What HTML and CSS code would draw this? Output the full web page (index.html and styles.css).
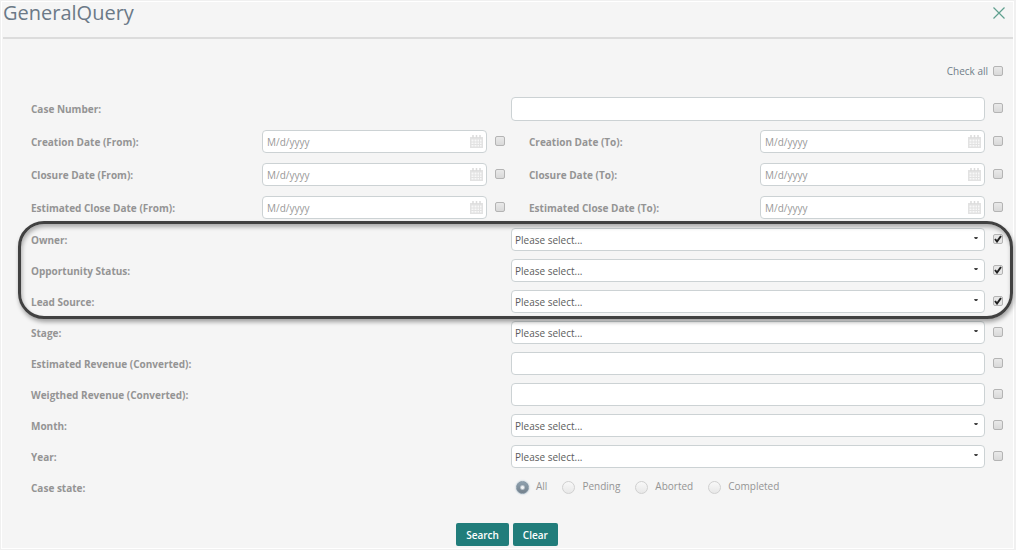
FILE: index.html
```html
<!DOCTYPE html>
<html lang="en">
<head>
<meta charset="utf-8">
<meta name="viewport" content="width=device-width, initial-scale=1">
<title>GeneralQuery</title>
<link rel="stylesheet" href="styles.css">
</head>
<body>
<svg class="sprite" aria-hidden="true">
  <symbol id="calendar" viewBox="0 0 13 13">
    <path d="M0 2h13v11H0z" fill="#e2e2e2"/>
    <path d="M3 0v3M6.500 0v3M10 0v3" stroke="#dcdcdc" stroke-width="1.500"/>
    <path d="M1.500 4.500h2v2h-2zM4.500 4.500h2v2h-2zM7.500 4.500h1.500v2H7.500zM10 4.500h1.500v2H10zM1.500 7.500h2v1.500h-2zM4.500 7.500h2V9h-2zM7.500 7.500H9V9H7.500zM10 7.500h1.500V9H10zM1.500 10h2v1.500h-2zM4.500 10h2v1.500h-2zM7.500 10H9v1.500H7.500zM10 10h1.500v1.500H10z" fill="#f8f8f8"/>
  </symbol>
</svg>
<main class="dialog">
  <header class="header">
    <h1 class="title">GeneralQuery</h1>
    <button class="close" type="button" aria-label="Close">
      <svg width="12" height="12" viewBox="0 0 12 12"><path d="M.5.5l11 11M11.500.5l-11 11" fill="none" stroke="#5fa08f" stroke-width="1.200"/></svg>
    </button>
  </header>
  <form class="form">
    <div class="check-all"><label for="all">Check all</label><input class="check" type="checkbox" id="all"></div>

    <div class="row tall"><label class="label" for="case">Case Number:</label><input class="field" id="case" type="text"><input class="check" type="checkbox" aria-label="Use Case Number"></div>

    <div class="row pair">
      <label class="label" for="d1">Creation Date (From):</label><div class="date"><input class="field" id="d1" type="text" placeholder="M/d/yyyy"><button class="pick" type="button" aria-label="Pick date"><svg class="cal"><use href="#calendar"/></svg></button></div><input class="check" type="checkbox" aria-label="Use Creation Date (From)">
      <label class="label second" for="d2">Creation Date (To):</label><div class="date"><input class="field" id="d2" type="text" placeholder="M/d/yyyy"><button class="pick" type="button" aria-label="Pick date"><svg class="cal"><use href="#calendar"/></svg></button></div><input class="check" type="checkbox" aria-label="Use Creation Date (To)">
    </div>
    <div class="row pair">
      <label class="label" for="d3">Closure Date (From):</label><div class="date"><input class="field" id="d3" type="text" placeholder="M/d/yyyy"><button class="pick" type="button" aria-label="Pick date"><svg class="cal"><use href="#calendar"/></svg></button></div><input class="check" type="checkbox" aria-label="Use Closure Date (From)">
      <label class="label second" for="d4">Closure Date (To):</label><div class="date"><input class="field" id="d4" type="text" placeholder="M/d/yyyy"><button class="pick" type="button" aria-label="Pick date"><svg class="cal"><use href="#calendar"/></svg></button></div><input class="check" type="checkbox" aria-label="Use Closure Date (To)">
    </div>
    <div class="row pair">
      <label class="label" for="d5">Estimated Close Date (From):</label><div class="date"><input class="field" id="d5" type="text" placeholder="M/d/yyyy"><button class="pick" type="button" aria-label="Pick date"><svg class="cal"><use href="#calendar"/></svg></button></div><input class="check" type="checkbox" aria-label="Use Estimated Close Date (From)">
      <label class="label second" for="d6">Estimated Close Date (To):</label><div class="date"><input class="field" id="d6" type="text" placeholder="M/d/yyyy"><button class="pick" type="button" aria-label="Pick date"><svg class="cal"><use href="#calendar"/></svg></button></div><input class="check" type="checkbox" aria-label="Use Estimated Close Date (To)">
    </div>

    <div class="highlight">
      <div class="row"><label class="label" for="owner">Owner:</label><select class="field select" id="owner"><option>Please select...</option></select><input class="check" type="checkbox" checked aria-label="Use Owner"></div>
      <div class="row"><label class="label" for="status">Opportunity Status:</label><select class="field select" id="status"><option>Please select...</option></select><input class="check" type="checkbox" checked aria-label="Use Opportunity Status"></div>
      <div class="row"><label class="label" for="lead">Lead Source:</label><select class="field select" id="lead"><option>Please select...</option></select><input class="check" type="checkbox" checked aria-label="Use Lead Source"></div>
    </div>

    <div class="row"><label class="label" for="stage">Stage:</label><select class="field select" id="stage"><option>Please select...</option></select><input class="check" type="checkbox" aria-label="Use Stage"></div>
    <div class="row"><label class="label" for="est">Estimated Revenue (Converted):</label><input class="field" id="est" type="text"><input class="check" type="checkbox" aria-label="Use Estimated Revenue"></div>
    <div class="row"><label class="label" for="wei">Weigthed Revenue (Converted):</label><input class="field" id="wei" type="text"><input class="check" type="checkbox" aria-label="Use Weigthed Revenue"></div>
    <div class="row"><label class="label" for="month">Month:</label><select class="field select" id="month"><option>Please select...</option></select><input class="check" type="checkbox" aria-label="Use Month"></div>
    <div class="row"><label class="label" for="year">Year:</label><select class="field select" id="year"><option>Please select...</option></select><input class="check" type="checkbox" aria-label="Use Year"></div>
    <div class="row" role="radiogroup" aria-labelledby="state">
      <span class="label" id="state">Case state:</span>
      <div class="radios">
        <label class="option"><input class="radio" type="radio" name="state" checked><span class="option-text">All</span></label>
        <label class="option"><input class="radio" type="radio" name="state"><span class="option-text">Pending</span></label>
        <label class="option"><input class="radio" type="radio" name="state"><span class="option-text">Aborted</span></label>
        <label class="option"><input class="radio" type="radio" name="state"><span class="option-text">Completed</span></label>
      </div>
    </div>
    <div class="actions"><button class="btn" type="button">Search</button><button class="btn" type="reset">Clear</button></div>
  </form>
</main>
</body>
</html>
```

FILE: styles.css
```css
* { box-sizing: border-box; }
body {
  margin: 0;
  padding: 1px 2px 1px 1px;
  background: #f0f0f0;
  color: #6f7d88;
  font: 10px/16px "Open Sans", "Noto Sans", sans-serif;
}
.sprite { display: none; }
.dialog {
  min-height: calc(100vh - 2px);
  border: 1px solid #fff;
  background: #f5f5f5;
}
.header {
  display: flex;
  justify-content: space-between;
  align-items: flex-start;
  height: 37px;
  margin: 0 0 0 1px;
  padding-right: 8px;
  border-bottom: 2px solid #dcdcdc;
}
.title {
  margin: 0;
  color: #6b7987;
  font-size: 20px;
  line-height: 22px;
  font-weight: 400;
}
.close {
  display: flex;
  margin-top: 5px;
  padding: 0;
  border: 0;
  background: none;
}
.form { padding: 24px 10px 0 29px; }
.check-all {
  display: flex;
  justify-content: flex-end;
  align-items: center;
  gap: 5px;
  height: 16px;
  margin-bottom: 13px;
}
.row {
  display: grid;
  grid-template-columns: 480fr 474fr 18px;
  align-items: center;
  height: 31px;
}
.tall, .pair { height: 33px; }
.pair { grid-template-columns: 231fr 225fr 18px 255fr 225fr 18px; }
.second { padding-left: 24px; }
.label { color: #949494; font-weight: 700; }
.field {
  width: 100%;
  height: 23px;
  padding: 0 4px;
  border: 1px solid #ccd2d4;
  border-radius: 4px;
  background: #fff;
  color: #5c5c5c;
  font: inherit;
}
.tall .field { height: 24px; }
.field::placeholder { color: #999; opacity: 1; }
.date { position: relative; }
.date .field { display: block; padding-right: 24px; }
.pick {
  position: absolute;
  top: 5px;
  right: 4px;
  display: flex;
  padding: 0;
  border: 0;
  background: none;
}
.cal { width: 13px; height: 13px; }
.select {
  padding: 0 3px;
  appearance: none;
  background: #fff url("data:image/svg+xml,%3Csvg xmlns='http://www.w3.org/2000/svg' width='4' height='2'%3E%3Cpath d='M0 0h4L3 2H1z' fill='%23444'/%3E%3C/svg%3E") no-repeat right 6px top 8px;
}
.check {
  appearance: none;
  justify-self: end;
  width: 10px;
  height: 10px;
  margin: 0 0 2px;
  border: 1px solid #b4b4b4;
  border-radius: 2px;
  background: linear-gradient(#e9e9e9, #d9d9d9);
}
.check-all .check { margin: 0; }
.check:checked {
  background: #e6e6e6 url("data:image/svg+xml,%3Csvg xmlns='http://www.w3.org/2000/svg' width='8' height='8'%3E%3Cpath d='M1 4l2 2.500L7 1' fill='none' stroke='%23222' stroke-width='2'/%3E%3C/svg%3E") center no-repeat;
}
.highlight { position: relative; }
.highlight::after {
  content: "";
  position: absolute;
  inset: -3px -10px -2px -13px;
  border: 3px solid #414141;
  border-radius: 26px;
  box-shadow: 1px 3px 4px rgba(0, 0, 0, .35), inset 1px 3px 4px rgba(0, 0, 0, .3);
  pointer-events: none;
}
.radios { display: flex; gap: 15px; padding-left: 5px; }
.option { display: flex; align-items: center; gap: 7px; color: #949494; }
.option-text { margin-bottom: 3px; }
.radio {
  appearance: none;
  width: 13px;
  height: 13px;
  margin: 0;
  border: 1px solid #d0d0d0;
  border-radius: 50%;
  background: linear-gradient(#f8f8f8, #e8e8e8);
}
.radio:checked {
  border-color: #8496a4;
  background: radial-gradient(circle, #f2f5f7 0 1px, transparent 3px), linear-gradient(#8fa1af, #74818c);
  box-shadow: 0 0 2px #9db4c4;
}
.actions {
  display: flex;
  justify-content: center;
  gap: 4px;
  margin-top: 20px;
  padding-right: 20px;
}
.btn {
  height: 23px;
  padding: 0 10px;
  border: 0;
  border-radius: 2px;
  background: #217d7b;
  color: #fff;
  font: 600 10px/16px "Open Sans", "Noto Sans", sans-serif;
}
```
